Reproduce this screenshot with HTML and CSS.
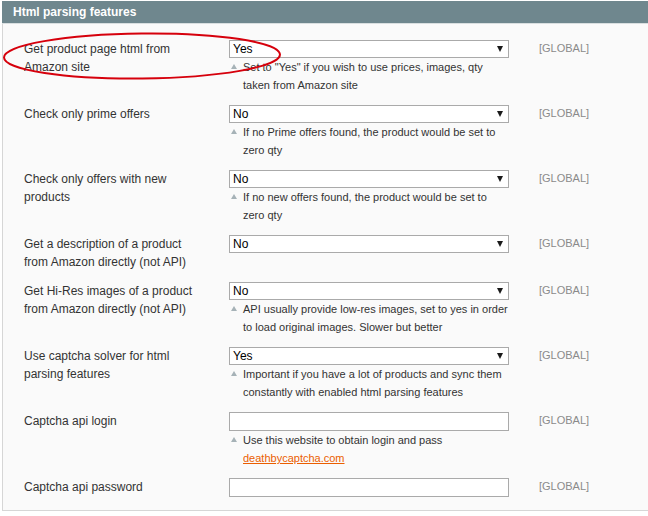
FILE: index.html
```html
<!DOCTYPE html>
<html>
<head>
<meta charset="utf-8">
<link rel="stylesheet" href="styles.css">
</head>
<body>
<div class="section">
  <div class="section-head">Html parsing features</div>
  <div class="section-body">
    <div class="row">
      <div class="label">Get product page html from Amazon site</div>
      <div class="field">
        <div class="select"><span class="value">Yes</span><span class="arrow"></span></div>
        <div class="hint"><span class="marker"></span><span class="hint-text">Set to "Yes" if you wish to use prices, images, qty taken from Amazon site</span></div>
      </div>
      <div class="scope">[GLOBAL]</div>
    </div>
    <div class="row">
      <div class="label">Check only prime offers</div>
      <div class="field">
        <div class="select"><span class="value">No</span><span class="arrow"></span></div>
        <div class="hint"><span class="marker"></span><span class="hint-text">If no Prime offers found, the product would be set to zero qty</span></div>
      </div>
      <div class="scope">[GLOBAL]</div>
    </div>
    <div class="row">
      <div class="label">Check only offers with new products</div>
      <div class="field">
        <div class="select"><span class="value">No</span><span class="arrow"></span></div>
        <div class="hint"><span class="marker"></span><span class="hint-text">If no new offers found, the product would be set to zero qty</span></div>
      </div>
      <div class="scope">[GLOBAL]</div>
    </div>
    <div class="row">
      <div class="label">Get a description of a product from Amazon directly (not API)</div>
      <div class="field">
        <div class="select"><span class="value">No</span><span class="arrow"></span></div>
      </div>
      <div class="scope">[GLOBAL]</div>
    </div>
    <div class="row">
      <div class="label">Get Hi-Res images of a product from Amazon directly (not API)</div>
      <div class="field">
        <div class="select"><span class="value">No</span><span class="arrow"></span></div>
        <div class="hint"><span class="marker"></span><span class="hint-text">API usually provide low-res images, set to yes in order to load original images. Slower but better</span></div>
      </div>
      <div class="scope">[GLOBAL]</div>
    </div>
    <div class="row">
      <div class="label">Use captcha solver for html parsing features</div>
      <div class="field">
        <div class="select"><span class="value">Yes</span><span class="arrow"></span></div>
        <div class="hint"><span class="marker"></span><span class="hint-text">Important if you have a lot of products and sync them constantly with enabled html parsing features</span></div>
      </div>
      <div class="scope">[GLOBAL]</div>
    </div>
    <div class="row">
      <div class="label">Captcha api login</div>
      <div class="field">
        <div class="input"></div>
        <div class="hint"><span class="marker"></span><span class="hint-text">Use this website to obtain login and pass<br><a class="link" href="#">deathbycaptcha.com</a></span></div>
      </div>
      <div class="scope">[GLOBAL]</div>
    </div>
    <div class="row">
      <div class="label">Captcha api password</div>
      <div class="field">
        <div class="input"></div>
      </div>
      <div class="scope">[GLOBAL]</div>
    </div>
  </div>
</div>
<svg class="annotation" width="300" height="60" viewBox="0 0 300 60">
  <ellipse cx="142" cy="28" rx="138" ry="22.5" fill="none" stroke="#d6000c" stroke-width="2" transform="rotate(-0.6 142 28)"/>
</svg>
</body>
</html>
```
FILE: styles.css
```css
html, body {
  margin: 0;
  padding: 0;
  background: #ffffff;
  overflow: hidden;
}
body {
  width: 648px;
  height: 516px;
  position: relative;
  font-family: "Liberation Sans", Arial, sans-serif;
  padding: 1px 0 0 2px;
  box-sizing: border-box;
}
.section {
  width: 670px;
}
.section-head {
  height: 22px;
  line-height: 22px;
  background: #6f878e;
  color: #ffffff;
  font-weight: bold;
  font-size: 12px;
  padding-left: 11px;
  border-bottom: 1px solid #d9dfe0;
}
.section-body {
  background: #fafafa;
  border-left: 1px solid #d6d6d6;
  border-bottom: 1px solid #d6d6d6;
  padding: 11px 0 7px 21px;
}
.row {
  display: grid;
  grid-template-columns: 205px 280px auto;
  padding: 5px 0 6px;
}
.label {
  font-size: 12px;
  line-height: 18px;
  color: #333333;
  padding-right: 30px;
}
.field {
  display: flex;
  flex-direction: column;
}
.select {
  height: 18px;
  box-sizing: border-box;
  border: 1px solid #aaaaaa;
  background: #ffffff;
  display: flex;
  align-items: center;
  justify-content: space-between;
  padding: 0 5px 0 3px;
  font-size: 12px;
  color: #000000;
}
.arrow {
  width: 0;
  height: 0;
  border-left: 3.5px solid transparent;
  border-right: 3.5px solid transparent;
  border-top: 6px solid #1a1a1a;
}
.input {
  height: 19px;
  box-sizing: border-box;
  border: 1px solid #aaaaaa;
  background: #ffffff;
}
.hint {
  display: flex;
  align-items: flex-start;
  font-size: 11px;
  line-height: 18px;
  color: #333333;
}
.marker {
  flex: none;
  width: 0;
  height: 0;
  margin: 6px 6px 0 2px;
  border-left: 3px solid transparent;
  border-right: 3px solid transparent;
  border-bottom: 5px solid #a6b2b7;
}
.hint-text {
  flex: 1;
}
.link {
  color: #eb5e00;
  text-decoration: underline;
}
.scope {
  font-size: 11px;
  line-height: 18px;
  color: #8a8a8a;
  padding-left: 30px;
  margin-top: -1px;
}
.annotation {
  position: absolute;
  left: 0;
  top: 28px;
}
```
